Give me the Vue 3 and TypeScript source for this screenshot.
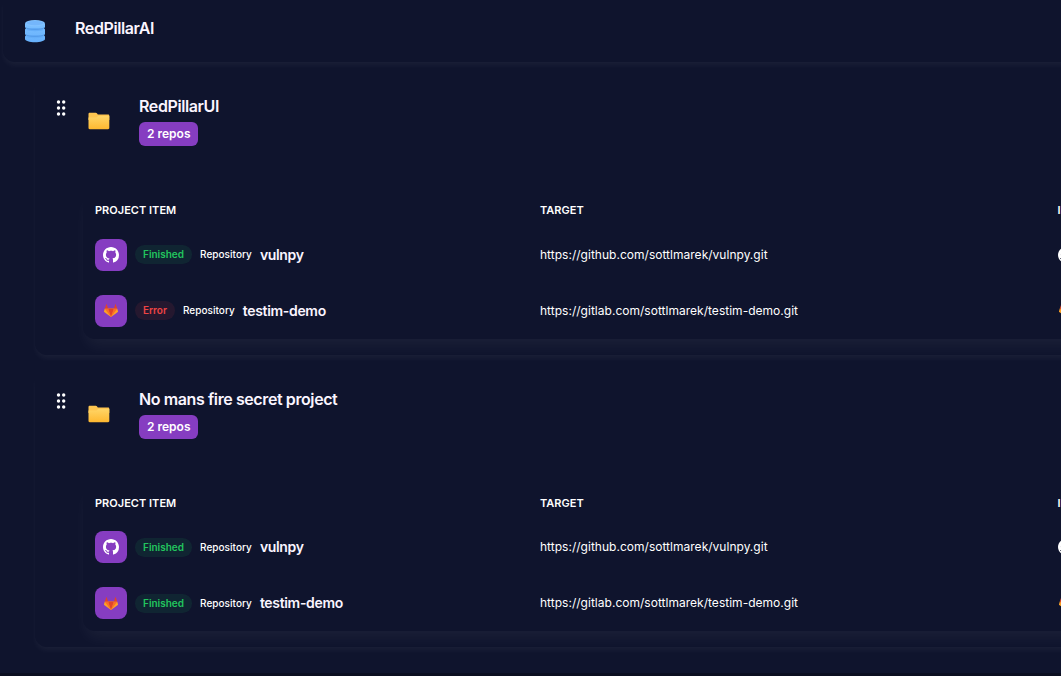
<script setup lang="ts">
interface Item { kind: 'github' | 'gitlab'; status: 'Finished' | 'Error'; name: string; url: string }
interface Group { title: string; items: Item[] }

const github = (status: Item['status']): Item => ({
  kind: 'github', status, name: 'vulnpy', url: 'https://github.com/sottlmarek/vulnpy.git',
})
const gitlab = (status: Item['status']): Item => ({
  kind: 'gitlab', status, name: 'testim-demo', url: 'https://gitlab.com/sottlmarek/testim-demo.git',
})
const groups: Group[] = [
  { title: 'RedPillarUI', items: [github('Finished'), gitlab('Error')] },
  { title: 'No mans fire secret project', items: [github('Finished'), gitlab('Finished')] },
]
</script>

<template>
  <svg class="defs" width="0" height="0">
    <defs>
      <linearGradient id="folder-front" x1="0" y1="0" x2="0" y2="1">
        <stop offset="0" stop-color="#ffd566" />
        <stop offset="1" stop-color="#feb830" />
      </linearGradient>
      <linearGradient id="db-body" x1="0" y1="0" x2="0" y2="1">
        <stop offset="0" stop-color="#7cc0ff" />
        <stop offset="1" stop-color="#66b0fc" />
      </linearGradient>
      <symbol id="github" viewBox="0 0 16 16">
        <path fill="#fff" d="M8 0C3.58 0 0 3.58 0 8c0 3.54 2.29 6.53 5.47 7.59.4.07.55-.17.55-.38 0-.19-.01-.82-.01-1.49-2.01.37-2.53-.49-2.69-.94-.09-.23-.48-.94-.82-1.13-.28-.15-.68-.52-.01-.53.63-.01 1.08.58 1.23.82.72 1.21 1.87.87 2.33.66.07-.52.28-.87.51-1.07-1.78-.2-3.64-.89-3.64-3.95 0-.87.31-1.59.82-2.15-.08-.2-.36-1.02.08-2.12 0 0 .67-.21 2.2.82.64-.18 1.32-.27 2-.27s1.36.09 2 .27c1.53-1.04 2.2-.82 2.2-.82.44 1.1.16 1.92.08 2.12.51.56.82 1.27.82 2.15 0 3.07-1.87 3.75-3.65 3.95.29.25.54.73.54 1.48 0 1.07-.01 1.93-.01 2.2 0 .21.15.46.55.38A8.01 8.01 0 0 0 16 8c0-4.42-3.58-8-8-8z" />
      </symbol>
      <symbol id="gitlab" viewBox="0 0 14 13">
        <path fill="#fca326" d="M.8 4.600 0 7.200c-.1.300 0 .600.2.700L7 13l6.800-5.100c.2-.1.300-.4.200-.7l-.8-2.600z" />
        <path fill="#fc6d26" d="M.8 4.600h3.300L7 13 1.200 5.300zM13.200 4.600H9.900L7 13l5.800-7.700z" />
        <path fill="#e24329" d="M4.100 4.600h5.800L7 13zM.8 4.600 2.300.2c.1-.3.300-.3.400 0l1.400 4.400zM13.200 4.600 11.700.2c-.1-.3-.3-.3-.4 0L9.900 4.600z" />
      </symbol>
    </defs>
  </svg>

  <main class="page">
    <header class="topbar">
      <svg class="db" viewBox="0 0 22 24">
        <path fill="url(#db-body)" d="M1 4.500V8l.9 1.200L1 10.500V15l.9 1.200-.9 1.200V20c0 1.800 4.500 3.300 10 3.300S21 21.800 21 20v-2.600l-.9-1.200.9-1.200v-4.500l-.9-1.300L21 8V4.500z" />
        <ellipse cx="11" cy="10.600" rx="8.500" ry="1.700" fill="#64adf8" />
        <ellipse cx="11" cy="17.600" rx="8.500" ry="1.700" fill="#64adf8" />
        <path fill="none" stroke="#4b92e2" stroke-width=".7" d="M1.400 8.500C4 11 18 11 20.600 8.500M1.400 15.500c2.600 2.500 16.600 2.500 19.200 0" />
        <ellipse cx="11" cy="4.300" rx="9.900" ry="3.200" fill="#82c2ff" />
        <ellipse cx="11" cy="4.100" rx="8.400" ry="2.100" fill="#74b6fb" />
      </svg>
      <h1 class="title">RedPillarAI</h1>
    </header>

    <section v-for="g in groups" :key="g.title" class="group">
      <div class="head">
        <svg class="grip" viewBox="0 0 10 16">
          <g fill="#fff">
            <template v-for="y in [2, 8, 14]" :key="y">
              <circle cx="2.500" :cy="y" r="1.700" />
              <circle cx="7.700" :cy="y" r="1.700" />
            </template>
          </g>
        </svg>
        <svg class="folder" viewBox="0 0 22 18">
          <path fill="#ffc650" d="M.5 2c0-.8.500-1.300 1.300-1.300h6c.5 0 .8.200 1.100.6l.9 1.200h10.200c.8 0 1.300.5 1.300 1.300V8H.5z" />
          <path fill="url(#folder-front)" d="M.5 5.500h7.200c.6 0 .9-.1 1.300-.5l.6-.5c.3-.3.600-.4 1.100-.4h10.600V16c0 .7-.5 1.200-1.200 1.200H1.700c-.7 0-1.200-.5-1.200-1.200z" />
        </svg>
        <div class="heading">
          <h2 class="title">{{ g.title }}</h2>
          <span class="count">2 repos</span>
        </div>
      </div>

      <div class="table">
        <div class="row labels"><span>PROJECT ITEM</span><span>TARGET</span><span>INTEGRATION</span></div>
        <div v-for="i in g.items" :key="i.url" class="row">
          <div class="item">
            <span class="tile"><svg :class="i.kind"><use :href="'#' + i.kind" /></svg></span>
            <span class="status" :class="i.status.toLowerCase()">{{ i.status }}</span>
            <span class="type">Repository</span>
            <span class="name">{{ i.name }}</span>
          </div>
          <span class="url">{{ i.url }}</span>
          <span class="source"><svg :class="i.kind"><use :href="'#' + i.kind" /></svg></span>
        </div>
      </div>
    </section>
  </main>
</template>

<style>
html, body { margin: 0; background: #0f142d; overflow: hidden; }
</style>

<style scoped>
.defs { position: absolute; }
.page {
  box-sizing: border-box; width: 100%; height: 676px; overflow: hidden;
  padding-left: 3px; color: #fff; background: #0f142d;
  border-bottom: 3px solid #0b0e20;
  font-family: Inter, "Liberation Sans", sans-serif;
}
.topbar {
  box-sizing: border-box; width: 1300px; height: 62px; display: flex; padding: 18px 0 0 21px;
  border-radius: 0 0 0 12px;
  background: #0f142d; box-shadow: 0 4px 6px -1px rgba(255, 255, 255, .05);
}
.db { width: 22px; height: 24px; margin-top: .5px; }
.title { margin: 0; font-size: 16px; line-height: 20px; font-weight: 600; letter-spacing: -.4px; color: #faf5ff; }
.topbar .title { margin-left: 29px; }
.group {
  box-sizing: border-box; width: 1268px; height: 276.500px; margin: 16px 0 0 32px; padding-top: 18px;
  border-radius: 12px; box-shadow: 0 4px 6px -1px rgba(255, 255, 255, .05);
}
.head { display: flex; height: 92px; }
.grip { width: 10px; height: 16px; margin: 4px 0 0 21px; }
.folder { width: 22px; height: 18px; margin: 16px 0 0 22px; }
.heading { margin-left: 29px; display: flex; flex-direction: column; align-items: flex-start; gap: 6px; }
.count {
  height: 24px; line-height: 24px; padding: 0 8px; border-radius: 6px;
  background: #863dc1; font-size: 12px; font-weight: 600;
}
.table {
  box-sizing: border-box; height: 150.500px; margin-left: 48px; padding: 6px 0 0 12px;
  border-radius: 12px; box-shadow: 0 10px 15px -3px rgba(255, 255, 255, .05);
}
.row { display: grid; grid-template-columns: 445px 517.500px 1fr; align-items: center; height: 56px; }
.labels { height: 32.500px; font-size: 11px; font-weight: 600; letter-spacing: .02px; }
.item { display: flex; align-items: center; }
.tile { display: flex; align-items: center; justify-content: center; width: 32px; height: 32px; border-radius: 8px; background: #863dc1; }
.github { width: 16px; height: 16px; }
.gitlab { width: 14px; height: 13px; }
.status { height: 19px; line-height: 19px; margin: 0 8px; padding: 0 8px; border-radius: 10px; font-size: 10px; font-weight: 600; }
.finished { color: #22c55e; background: rgba(34, 197, 94, .1); }
.error { color: #ef4444; background: rgba(239, 68, 68, .1); }
.type { font-size: 10px; font-weight: 500; letter-spacing: .04px; margin-right: 8px; padding-bottom: 1px; }
.name { font-size: 14px; font-weight: 600; letter-spacing: -.33px; padding-bottom: 1px; color: #faf5ff; }
.url { font-size: 12px; letter-spacing: .02px; padding-bottom: 1px; }
.source { display: flex; }
.source .gitlab { margin-left: 1px; }
</style>
